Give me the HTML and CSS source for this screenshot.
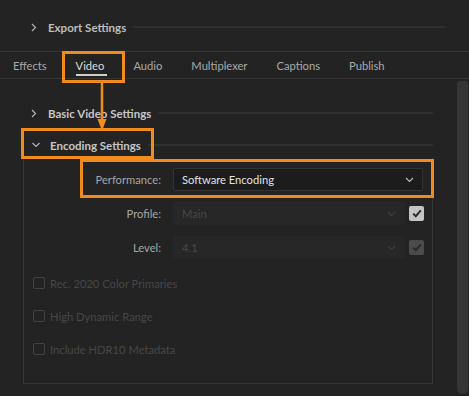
FILE: index.html
```html
<!DOCTYPE html>
<html lang="en">
<head>
    <meta charset="UTF-8">
    <title>Export Settings - Video</title>
    <link rel="stylesheet" href="styles.css">
</head>
<body>
    <div class="panel">
        <div class="section-head top">
            <svg class="chev" width="6" height="9" viewBox="0 0 6 9"><path d="M1 1l3.5 3.5L1 8" fill="none" stroke="#b4b4b4" stroke-width="1.2"/></svg>
            <span class="head-text">Export Settings</span>
            <span class="head-line"></span>
        </div>

        <div class="tabs">
            <span class="tab">Effects</span>
            <span class="tab active">Video</span>
            <span class="tab">Audio</span>
            <span class="tab">Multiplexer</span>
            <span class="tab">Captions</span>
            <span class="tab">Publish</span>
        </div>

        <div class="scroll-area">
            <div class="sections">
                <div class="section-head">
                    <svg class="chev" width="6" height="9" viewBox="0 0 6 9"><path d="M1 1l3.5 3.5L1 8" fill="none" stroke="#b4b4b4" stroke-width="1.2"/></svg>
                    <span class="head-text bold">Basic Video Settings</span>
                    <span class="head-line"></span>
                </div>
                <div class="section-head open">
                    <svg class="chev" width="9" height="6" viewBox="0 0 9 6"><path d="M1 1l3.5 3.5L8 1" fill="none" stroke="#b4b4b4" stroke-width="1.2"/></svg>
                    <span class="head-text bold">Encoding Settings</span>
                    <span class="head-line"></span>
                </div>

                <div class="group">
                    <div class="field-grid">
                        <label class="field-label">Performance:</label>
                        <div class="select wide">
                            <span>Software Encoding</span>
                            <svg width="9" height="6" viewBox="0 0 9 6"><path d="M1 1l3.5 3.5L8 1" fill="none" stroke="#bdbdbd" stroke-width="1.1"/></svg>
                        </div>

                        <label class="field-label">Profile:</label>
                        <div class="select disabled">
                            <span>Main</span>
                            <svg width="9" height="6" viewBox="0 0 9 6"><path d="M1 1l3.5 3.5L8 1" fill="none" stroke="#3e3e3e" stroke-width="1.1"/></svg>
                        </div>
                        <span class="check on"><svg width="10" height="9" viewBox="0 0 10 9"><path d="M1.2 4.6l2.6 2.6L8.8 1.4" fill="none" stroke="#2b2b2b" stroke-width="2"/></svg></span>

                        <label class="field-label">Level:</label>
                        <div class="select disabled">
                            <span>4.1</span>
                            <svg width="9" height="6" viewBox="0 0 9 6"><path d="M1 1l3.5 3.5L8 1" fill="none" stroke="#3e3e3e" stroke-width="1.1"/></svg>
                        </div>
                        <span class="check on dim"><svg width="10" height="9" viewBox="0 0 10 9"><path d="M1.2 4.6l2.6 2.6L8.8 1.4" fill="none" stroke="#2a2a2a" stroke-width="2"/></svg></span>
                    </div>

                    <div class="options">
                        <label class="option"><span class="box"></span>Rec. 2020 Color Primaries</label>
                        <label class="option"><span class="box"></span>High Dynamic Range</label>
                        <label class="option"><span class="box"></span>Include HDR10 Metadata</label>
                    </div>
                </div>
            </div>
            <div class="scrollbar"></div>
        </div>

        <!-- tutorial callouts -->
        <div class="callout video-box"></div>
        <div class="callout encoding-box"></div>
        <div class="callout perf-box"></div>
        <svg class="arrow" width="12" height="50" viewBox="0 0 12 50"><path d="M6 0v40" stroke="#f28b1e" stroke-width="2.5"/><path d="M1.5 36L6 48l4.5-12z" fill="#f28b1e"/></svg>
    </div>
</body>
</html>
```

FILE: styles.css
```css
html, body {
    margin: 0;
    background: #232323;
}
body {
    font-family: "Lato", "Noto Sans", Arial, sans-serif;
    font-size: 11.2px;
    color: #b4b4b4;
}
.panel {
    position: relative;
    width: 469px;
    height: 396px;
    overflow: hidden;
}
.section-head {
    display: flex;
    align-items: center;
    height: 26px;
    padding-left: 29px;
}
.section-head.top {
    height: 48px;
    padding-top: 3px;
    padding-left: 29px;
    padding-right: 24px;
}
.section-head .chev {
    width: 10px;
    flex: none;
}
.section-head.open .chev {
    margin-left: 2px;
    width: 10px;
}
.head-text {
    margin-left: 9px;
    font-size: 11.5px;
    color: #bdbdbd;
    font-weight: 700;
    white-space: nowrap;
}
.head-text.bold {
    color: #c6c6c6;
}
.head-line {
    flex: 1;
    height: 2px;
    margin-left: 7px;
    background: #303030;
}
.tabs {
    display: flex;
    gap: 29px;
    height: 26px;
    padding-left: 13px;
    border-top: 1px solid #363636;
    border-bottom: 1px solid #363636;
}
.tab {
    position: relative;
    line-height: 28px;
    color: #a9a9a9;
}
.tab.active {
    color: #dcdcdc;
}
.tab.active::after {
    content: "";
    position: absolute;
    left: 0;
    right: -3px;
    bottom: 2px;
    height: 2px;
    background: #cfcfcf;
}
.scroll-area {
    display: flex;
    padding-top: 21px;
}
.sections {
    flex: none;
    width: 433px;
}
.sections .section-head {
    height: 26px;
    padding-left: 29px;
}
.sections .section-head + .section-head {
    margin-top: 6px;
}
.group {
    margin-left: 23px;
    height: 226px;
    border: 1px solid #363636;
    border-top: none;
    box-sizing: border-box;
}
.field-grid {
    display: grid;
    grid-template-columns: 137px 1fr 14px;
    column-gap: 12px;
    row-gap: 11px;
    align-items: center;
    padding: 10px 9px 0 0;
}
.field-label {
    text-align: right;
    color: #a5a5a5;
}
.select {
    display: flex;
    align-items: center;
    justify-content: space-between;
    height: 23px;
    padding: 0 8px 0 8px;
    box-sizing: border-box;
    background: #1c1c1c;
    border: 1px solid #333333;
    border-radius: 2px;
    color: #e2e2e2;
}
.select.wide {
    grid-column: 2 / 4;
}
.select.disabled {
    margin-right: -8px;
    background: #272727;
    border-color: #272727;
    color: #474747;
}
.check {
    display: flex;
    align-items: center;
    justify-content: center;
    width: 15px;
    height: 15px;
    border-radius: 2px;
    background: #c4c4c4;
}
.check.dim {
    background: #4b4b4b;
}
.options {
    display: flex;
    flex-direction: column;
    gap: 17px;
    padding: 16px 0 0 9px;
}
.option {
    display: flex;
    align-items: center;
    height: 16px;
    color: #474747;
}
.box {
    width: 10px;
    height: 10px;
    margin-right: 5px;
    border: 1.5px solid #434343;
    border-radius: 2px;
}
.scrollbar {
    width: 11px;
    height: 313px;
    margin-left: 24px;
    margin-top: -19px;
    background: #353535;
    border-radius: 3px 3px 6px 6px;
}
.callout {
    position: absolute;
    border: 3px solid #f28b1e;
    box-sizing: border-box;
}
.video-box {
    left: 62px;
    top: 51px;
    width: 63px;
    height: 32px;
}
.encoding-box {
    left: 21px;
    top: 128px;
    width: 133px;
    height: 31px;
}
.perf-box {
    left: 80px;
    top: 159px;
    width: 354px;
    height: 39px;
}
.arrow {
    position: absolute;
    left: 96px;
    top: 83px;
}
```
